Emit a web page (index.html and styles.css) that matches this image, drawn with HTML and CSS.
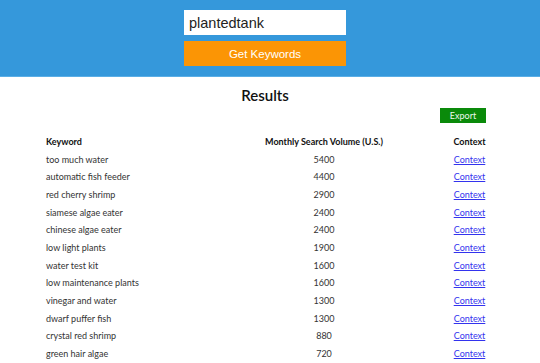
FILE: index.html
```html
<!DOCTYPE html>
<html lang="en">
<head>
  <meta charset="UTF-8">
  <meta name="viewport" content="width=device-width, initial-scale=1.0">
  <title>Keyword Tool</title>
  <link rel="stylesheet" href="styles.css">
</head>
<body>
  <div class="page">
    <div class="header">
      <form class="search" onsubmit="return false">
        <input type="text" id="query" value="plantedtank">
        <button type="submit" class="go">Get Keywords</button>
      </form>
    </div>
    <div class="results">
      <h2>Results</h2>
      <div class="toolbar">
        <button class="export">Export</button>
      </div>
      <table>
        <thead>
          <tr>
            <th class="kw">Keyword</th>
            <th class="vol">Monthly Search Volume (U.S.)</th>
            <th class="ctx">Context</th>
          </tr>
        </thead>
        <tbody>
          <tr><td class="kw">too much water</td><td class="vol">5400</td><td class="ctx"><a href="#">Context</a></td></tr>
          <tr><td class="kw">automatic fish feeder</td><td class="vol">4400</td><td class="ctx"><a href="#">Context</a></td></tr>
          <tr><td class="kw">red cherry shrimp</td><td class="vol">2900</td><td class="ctx"><a href="#">Context</a></td></tr>
          <tr><td class="kw">siamese algae eater</td><td class="vol">2400</td><td class="ctx"><a href="#">Context</a></td></tr>
          <tr><td class="kw">chinese algae eater</td><td class="vol">2400</td><td class="ctx"><a href="#">Context</a></td></tr>
          <tr><td class="kw">low light plants</td><td class="vol">1900</td><td class="ctx"><a href="#">Context</a></td></tr>
          <tr><td class="kw">water test kit</td><td class="vol">1600</td><td class="ctx"><a href="#">Context</a></td></tr>
          <tr><td class="kw">low maintenance plants</td><td class="vol">1600</td><td class="ctx"><a href="#">Context</a></td></tr>
          <tr><td class="kw">vinegar and water</td><td class="vol">1300</td><td class="ctx"><a href="#">Context</a></td></tr>
          <tr><td class="kw">dwarf puffer fish</td><td class="vol">1300</td><td class="ctx"><a href="#">Context</a></td></tr>
          <tr><td class="kw">crystal red shrimp</td><td class="vol">880</td><td class="ctx"><a href="#">Context</a></td></tr>
          <tr><td class="kw">green hair algae</td><td class="vol">720</td><td class="ctx"><a href="#">Context</a></td></tr>
        </tbody>
      </table>
    </div>
  </div>
</body>
</html>
```

FILE: styles.css
```css
body {
  margin: 0;
  font-family: Lato, "Open Sans", sans-serif;
  color: #222;
  background: #fff;
}
.page {
  width: 530px;
}
.header {
  width: 540px;
  background-color: #3598db;
  height: 76px;
  border-bottom: 1px solid #5aaee6;
}
.search {
  width: 162px;
  margin-left: 184px;
  padding-top: 10px;
  display: flex;
  flex-direction: column;
  gap: 6px;
}
.search input {
  box-sizing: border-box;
  width: 100%;
  height: 25px;
  border: none;
  padding: 0 5px;
  font-family: "Liberation Sans", Arial, sans-serif;
  font-size: 14.5px;
  color: #222;
  outline: none;
}
.go {
  height: 25px;
  border: none;
  background-color: #fb9505;
  color: #fff;
  font-family: "Liberation Sans", Arial, sans-serif;
  font-size: 11.5px;
  cursor: pointer;
}
.results {
  width: 460px;
  margin: 0 auto;
}
h2 {
  margin: 8px 0 0;
  text-align: center;
  font-size: 15px;
  font-weight: 600;
  line-height: 20px;
  color: #111;
}
.toolbar {
  display: flex;
  justify-content: flex-end;
  padding: 3px 9px 0 0;
}
.export {
  width: 46px;
  height: 15px;
  padding: 0;
  border: none;
  background-color: #0a8a0a;
  color: #eef8ee;
  font-family: Lato, sans-serif;
  font-size: 9px;
}
table {
  width: 460px;
  border-collapse: collapse;
  margin: 10px 0 0 5px;
  font-size: 9px;
}
th, td {
  padding: 0;
  height: 17.65px;
  line-height: 17.65px;
}
th {
  font-weight: 700;
  color: #111;
}
td {
  color: #333;
}
.kw {
  width: 163px;
  text-align: left;
  padding-left: 6px;
}
.vol {
  width: 230px;
  text-align: center;
}
.ctx {
  text-align: center;
}
.ctx a {
  color: #3333ee;
}
```
